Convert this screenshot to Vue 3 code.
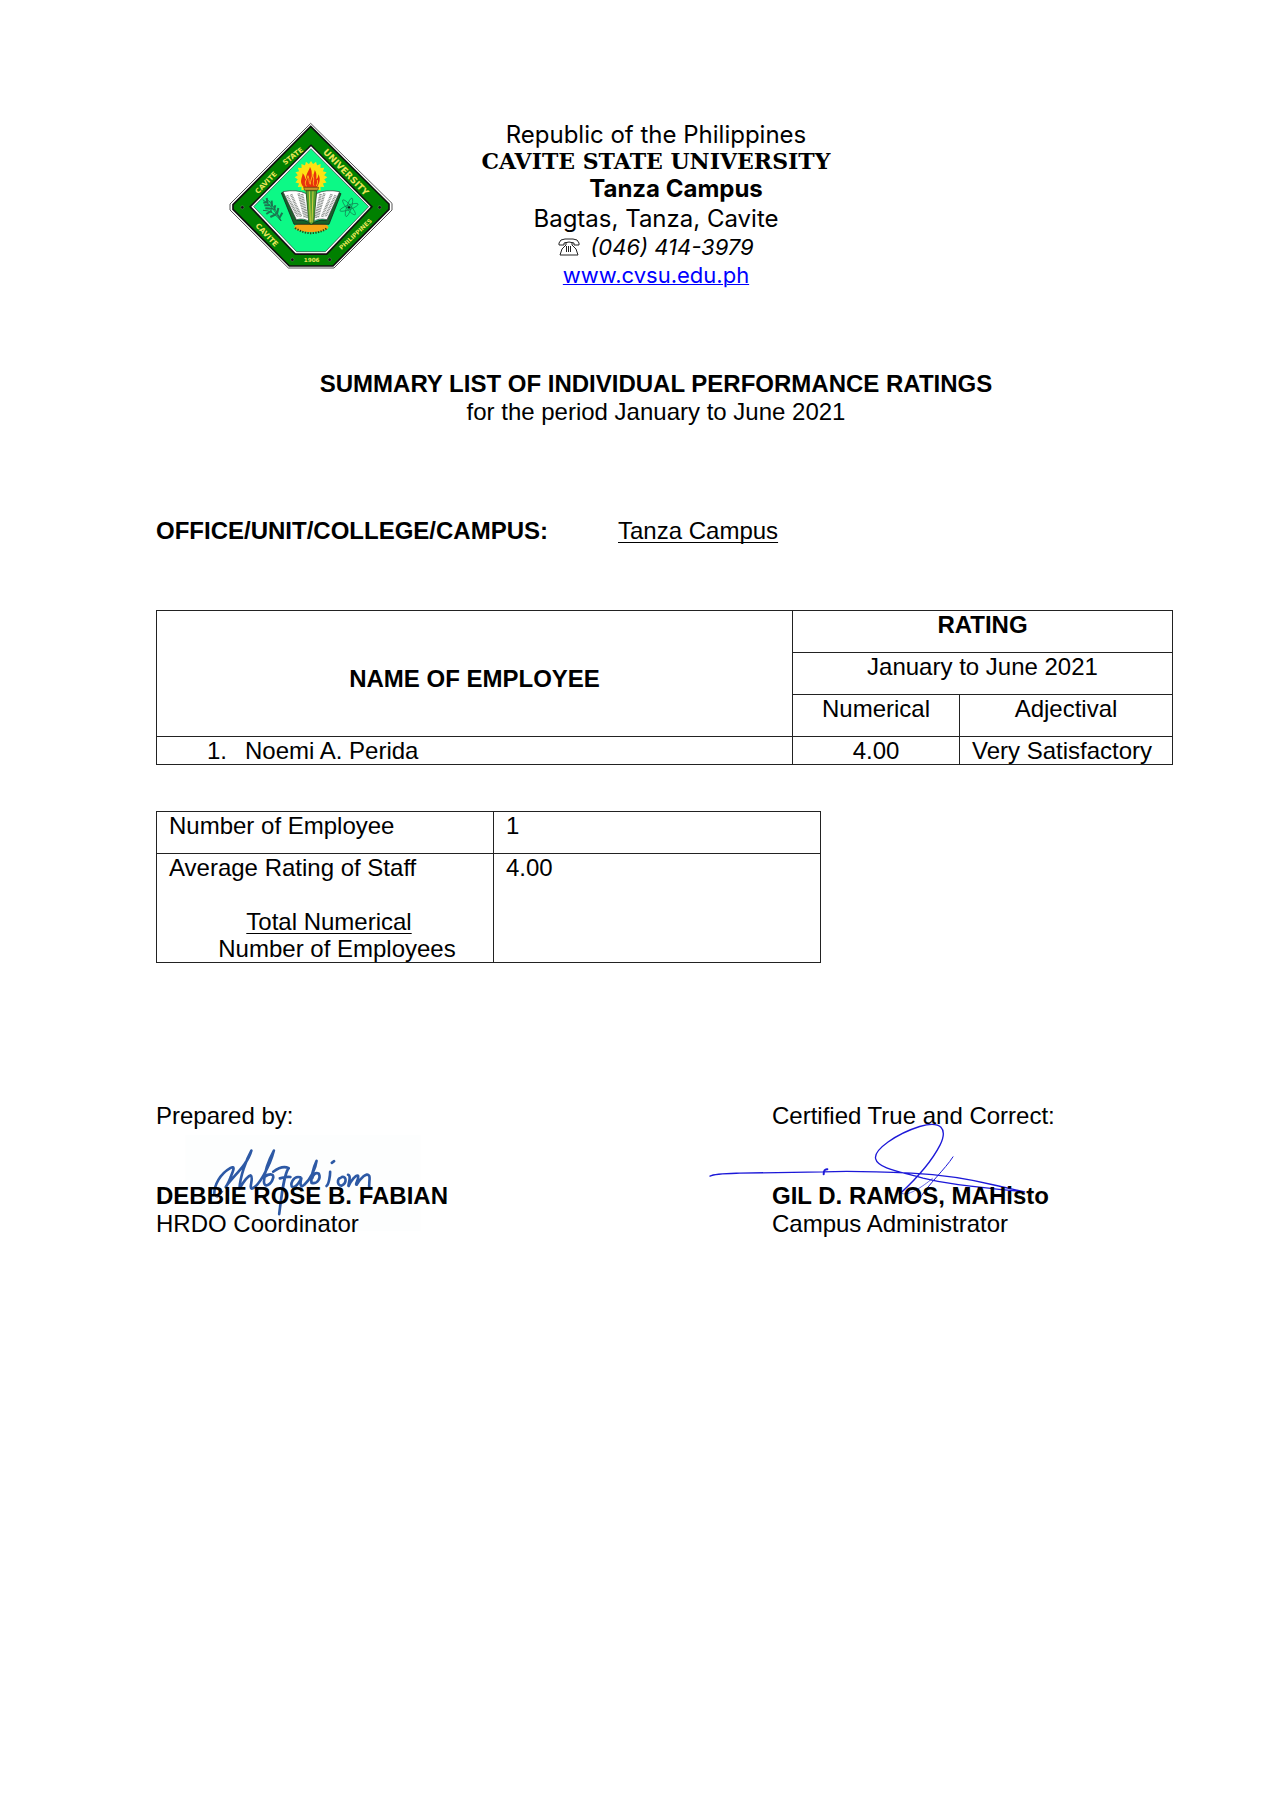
<script setup>
const employees = [
  { name: 'Noemi A. Perida', numerical: '4.00', adjectival: 'Very Satisfactory' },
]
const rays = Array.from({ length: 20 }, (_, i) => i * 18)
</script>

<template>
  <main class="page">
    <header class="letterhead">
      <svg class="seal" viewBox="30 34 510 456" role="img" aria-label="University seal">
        <path d="M287 41 L531 281 V301 L357 475 H220 L45 301 V283 Z" fill="#fff" stroke="#555" stroke-width="3" />
        <path d="M287 50 L522 283 V299 L354 469 H223 L54 299 V285 Z" fill="#008000" stroke="#111" stroke-width="5" />
        <path d="M288 104 L474 291 L336 436 H240 L102 291 Z" fill="#111" />
        <path d="M288 110 L467 291 L334 431 H242 L109 291 Z" fill="#fff" />
        <path d="M288 117 L461 291 L331 426 H245 L116 291 Z" fill="#0cf986" stroke="#333" stroke-width="2" />
        <g class="lettering">
          <text font-size="21" transform="translate(158 224) rotate(-46)">CAVITE</text>
          <text font-size="21" transform="translate(238 145) rotate(-38)">STATE</text>
          <text font-size="27" transform="translate(386 194) rotate(46)">UNIVERSITY</text>
          <text font-size="22" transform="translate(150 381) rotate(47)">CAVITE</text>
          <text font-size="18" transform="translate(426 378) rotate(-43)">PHILIPPINES</text>
          <text font-size="17" transform="translate(290 457)">1906</text>
        </g>
        <g fill="#111" stroke="#8a8">
          <circle cx="82" cy="293" r="5" /><circle cx="494" cy="293" r="5" />
          <circle cx="232" cy="450" r="5" /><circle cx="344" cy="450" r="5" />
        </g>
        <g fill="#fde313">
          <circle cx="288" cy="203" r="39" />
          <path v-for="r in rays" :key="r" d="M280 166 L288 154 L296 166 Z" :transform="`rotate(${r} 288 203)`" />
        </g>
        <path d="M268 234 C250 218 262 205 263 191 C271 200 270 207 274 211 C270 195 282 185 285 172 C294 186 287 194 294 203 C295 192 299 188 299 181 C308 194 302 202 305 209 C310 203 309 199 310 194 C320 213 310 224 306 234 Z" fill="#e8320c" />
        <path d="M274 230 C266 215 276 212 279 198 C284 211 280 216 286 224 C286 210 292 205 292 194 C301 213 291 217 297 228 M304 229 Q310 220 307 211" fill="none" stroke="#ffb31a" stroke-width="3" />
        <ellipse cx="289" cy="353" rx="51" ry="15" fill="#f7a516" />
        <path d="M240 355 Q288 386 338 355" fill="none" stroke="#234b19" stroke-width="6" stroke-dasharray="4 4" />
        <path d="M199 250 L207 247 L245 332 Q272 328 289 344 Q308 328 334 332 L370 249 L378 252 L342 344 H237 Z" fill="#17602a" stroke="#111" stroke-width="2" />
        <path d="M204 246 Q246 238 274 252 L285 337 Q267 324 244 330 Z M374 246 Q332 238 304 252 L293 337 Q310 324 336 330 Z" fill="#fff" stroke="#333" stroke-width="2" />
        <path d="M216 257 L249 321 M228 254 L258 321 M251 251 L270 324 M261 253 L276 324 M362 257 L331 321 M350 254 L321 321 M328 251 L308 324 M317 253 L302 324" stroke="#8d928f" stroke-width="8" stroke-dasharray="3 2" />
        <path d="M266 233 H311 L308 242 H269 Z" fill="#c9942c" stroke="#633b0c" stroke-width="2" />
        <path d="M273 243 H305 L297 337 L289 346 L281 337 Z" fill="#54a02c" stroke="#193c15" stroke-width="2" />
        <path d="M283 245 L286 338 M294 245 L291 338" stroke="#d6ce42" stroke-width="3" />
        <g fill="none" stroke="#1b7650" stroke-width="3">
          <path d="M143 270 Q172 287 198 334 M160 272 Q180 292 198 334 M144 302 Q174 301 198 334" />
          <path d="M145 279 l13 -2 M155 265 l3 17 M148 287 l18 0 M170 273 l1 18 M151 296 l22 1 M181 287 l-4 14 M154 313 l16 -10 M190 295 l-4 18 M166 322 l18 -9 M202 309 l-9 16" stroke-width="6" />
        </g>
        <g fill="none" stroke="#127a4e" stroke-width="2">
          <ellipse cx="402" cy="293" rx="29" ry="7" transform="rotate(50 402 293)" />
          <ellipse cx="402" cy="293" rx="29" ry="7" transform="rotate(-20 402 293)" />
          <ellipse cx="402" cy="293" rx="29" ry="7" transform="rotate(108 402 293)" />
          <circle cx="402" cy="293" r="4" fill="#111" />
        </g>
      </svg>

      <address class="institution">
        <div>Republic of the Philippines</div>
        <div class="university">CAVITE STATE UNIVERSITY</div>
        <div class="campus">Tanza Campus</div>
        <div>Bagtas, Tanza, Cavite</div>
        <div class="phone">
          <svg viewBox="0 0 22 18" width="22" height="18" fill="none" stroke="#222" aria-hidden="true">
            <path d="M1 7 V5 Q2 1 7 1 H15 Q20 1 21 5 V7 H16 V5 Q11 3 6 5 V7 Z" />
            <path d="M8 4 V7 Q3 10 2 17 H20 Q19 10 14 7 V4" />
            <path d="M8 9 H14 M8 11 H14 M8 13 H14" stroke-width="2" stroke-dasharray="1 1" />
          </svg>
          <em>(046) 414-3979</em>
        </div>
        <div class="site"><a href="http://www.cvsu.edu.ph">www.cvsu.edu.ph</a></div>
      </address>
    </header>

    <section class="title">
      <h1>SUMMARY LIST OF INDIVIDUAL PERFORMANCE RATINGS</h1>
      <p>for the period January to June 2021</p>
    </section>

    <p class="office">
      <strong>OFFICE/UNIT/COLLEGE/CAMPUS:</strong>
      <u>Tanza Campus</u>
    </p>

    <table class="ratings">
      <colgroup><col class="c-name"><col class="c-num"><col class="c-adj"></colgroup>
      <thead>
        <tr>
          <th rowspan="3" class="name-head">NAME OF EMPLOYEE</th>
          <th colspan="2">RATING</th>
        </tr>
        <tr><th colspan="2" class="plain">January to June 2021</th></tr>
        <tr><th class="plain">Numerical</th><th class="plain">Adjectival</th></tr>
      </thead>
      <tbody>
        <tr v-for="(e, i) in employees" :key="e.name">
          <td class="employee"><span class="index">{{ i + 1 }}.</span>{{ e.name }}</td>
          <td>{{ e.numerical }}</td>
          <td class="adjectival">{{ e.adjectival }}</td>
        </tr>
      </tbody>
    </table>

    <table class="summary">
      <colgroup><col class="c-label"><col></colgroup>
      <tbody>
        <tr><th scope="row">Number of Employee</th><td>{{ employees.length }}</td></tr>
        <tr>
          <th scope="row">
            Average Rating of Staff
            <div class="formula">
              <div class="numerator"><u>Total Numerical</u></div>
              <div>Number of Employees</div>
            </div>
          </th>
          <td>4.00</td>
        </tr>
      </tbody>
    </table>

    <section class="signatures">
      <div class="signatory">
        <p>Prepared by:</p>
        <svg class="ink ink-left" viewBox="135 135 710 290" aria-hidden="true">
          <path d="M135 135 H845 V425 H135 Z" fill="#fdfefe" />
          <g fill="none" stroke="#2d59a5" stroke-width="8" stroke-linecap="round" stroke-linejoin="round">
            <path d="M222 313 C222 286 239 253 270 235 C288 225 278 246 271 263 C263 285 250 303 260 287 C283 256 323 223 334 182 C318 210 300 261 298 297 C310 277 322 258 332 257 C342 262 326 296 335 297 C353 294 390 231 402 182 C390 204 374 242 372 276 C372 296 394 287 400 264 C402 250 386 252 376 260" />
            <path d="M400 246 C420 231 438 231 447 235 C432 252 425 321 418 374 M420 266 Q440 260 452 262 M482 263 C460 256 448 288 459 293 C472 293 481 272 485 266 C480 285 483 296 494 285 C514 267 528 236 531 213 C520 235 513 270 516 280 C535 284 544 264 538 252 C526 246 520 258 518 265 M572 246 C572 258 568 284 561 289 M577 219 L584 214 M603 265 C593 266 592 289 607 288 C623 280 622 259 607 262 M626 255 C638 257 624 291 628 289 C635 273 650 255 656 258 C661 264 646 286 652 285 C665 265 682 247 690 258 C694 266 687 285 691 297" />
            <path d="M222 313 Q228 338 248 305" stroke-width="3" />
          </g>
        </svg>
        <p class="signed"><strong>DEBBIE ROSE B. FABIAN</strong></p>
        <p>HRDO Coordinator</p>
      </div>
      <div class="signatory">
        <p>Certified True and Correct:</p>
        <svg class="ink ink-right" viewBox="55 95 960 245" aria-hidden="true">
          <g fill="none" stroke="#1c18d8" stroke-width="4" stroke-linecap="round" stroke-linejoin="round">
            <path d="M61 257 C75 249 105 249 150 248 L400 244 C490 240 580 244 665 248 C770 253 850 268 920 285 L1005 304 C900 294 780 284 700 263 C640 245 565 235 558 205 C551 178 620 130 690 108 C755 89 775 115 751 164 C730 205 690 255 634 307" />
            <path d="M413 236 Q402 235 402 251" stroke-width="6" />
            <path d="M790 199 C765 238 718 278 683 334" stroke-width="3" />
            <path d="M634 307 C650 322 700 288 728 264" stroke-width="2" />
          </g>
        </svg>
        <p class="signed"><strong>GIL D. RAMOS, MAHisto</strong></p>
        <p>Campus Administrator</p>
      </div>
    </section>
  </main>
</template>

<style>
body {
  margin: 0;
  background: #fff;
}
</style>

<style scoped>
.page {
  box-sizing: border-box;
  min-height: 100vh;
  padding: 121px 116px 80px 156px;
  color: #000;
  font: 24px/28px "Liberation Sans", Arial, sans-serif;
}
p,
h1 {
  margin: 0;
  font-size: 24px;
}
.letterhead {
  display: grid;
  grid-template-columns: 1fr auto 1fr;
}
.seal {
  width: 170px;
  height: 152px;
  margin-left: 69px;
}
.lettering {
  fill: #e9e45a;
  font-family: "DejaVu Sans", sans-serif;
  font-weight: bold;
  text-anchor: middle;
}
.institution {
  grid-column: 2;
  font-family: "Century Gothic", Inter, sans-serif;
  font-style: normal;
  text-align: center;
}
.university {
  font: bold 22px/24px "Bookman Old Style", "DejaVu Serif", serif;
}
.campus {
  padding-left: 40px;
  font-weight: bold;
  line-height: 32px;
}
.phone,
.site {
  font-size: 22px;
}
.phone {
  display: flex;
  align-items: center;
  justify-content: center;
  gap: 10px;
}
a {
  color: #00f;
  text-decoration-thickness: 1px;
}
u {
  text-decoration-thickness: 1px;
  text-underline-offset: 3px;
  text-decoration-skip-ink: none;
}
.title {
  margin-top: 81px;
  text-align: center;
}
.office {
  display: flex;
  gap: 70px;
  margin-top: 91px;
}
table {
  border-collapse: collapse;
  table-layout: fixed;
}
th,
td {
  box-sizing: border-box;
  border: 1px solid #222;
  padding: 0 12px;
  line-height: 27px;
  vertical-align: top;
}
.ratings {
  width: calc(100% + 17px);
  margin-top: 65px;
  text-align: center;
}
.ratings thead tr {
  height: 42px;
}
.ratings .name-head {
  vertical-align: middle;
  padding-top: 10px;
}
.c-num {
  width: 167px;
}
.c-adj {
  width: 213px;
}
.plain {
  font-weight: normal;
}
.ratings .employee {
  padding-left: 50px;
  text-align: left;
}
.index {
  display: inline-block;
  width: 38px;
}
.adjectival {
  text-align: left;
}
.summary {
  width: 665px;
  margin-top: 46px;
}
.c-label {
  width: 337px;
}
.summary th {
  font-weight: normal;
  text-align: left;
}
.summary tr:first-child {
  height: 42px;
}
.formula {
  margin-top: 27px;
  padding-left: 24px;
  text-align: center;
}
.numerator {
  padding-right: 16px;
}
.signatures {
  display: grid;
  grid-template-columns: 616px 1fr;
  margin-top: 139px;
}
.signatory {
  position: relative;
}
.signatory p {
  position: relative;
  z-index: 1;
}
.signed {
  margin-top: 52px;
}
.ink {
  position: absolute;
}
.ink-left {
  top: 33px;
  left: 29px;
  width: 236px;
  height: 96px;
}
.ink-right {
  top: 20px;
  left: -64px;
  width: 320px;
  height: 82px;
}
</style>
